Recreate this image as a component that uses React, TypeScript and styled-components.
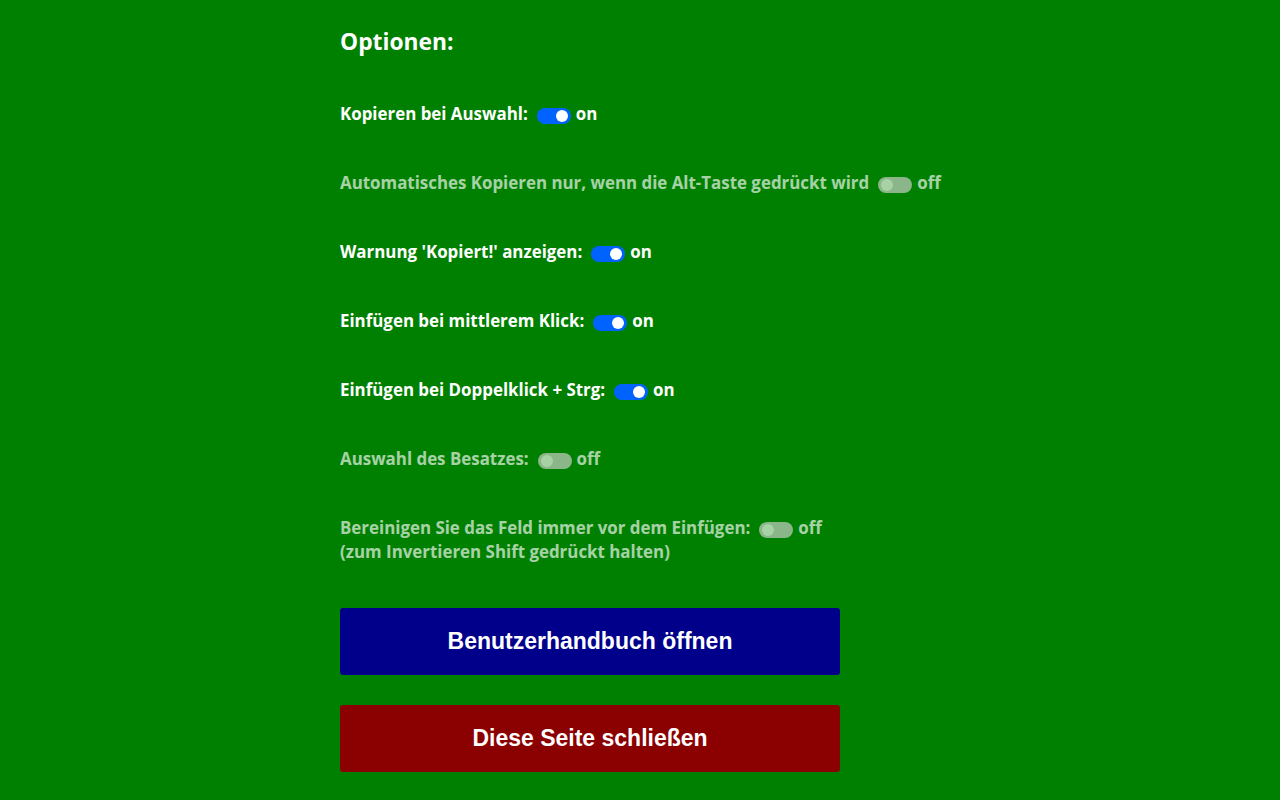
import React, { useState } from 'react';
import styled, { createGlobalStyle } from 'styled-components';

const GlobalStyle = createGlobalStyle`
  html, body {
    margin: 0;
    padding: 0;
    background: #008000;
  }
  body {
    font-family: 'Open Sans', 'Noto Sans', sans-serif;
    color: #ffffff;
  }
`;

const Page = styled.div`
  width: 600px;
  margin: 0 auto;
  padding-top: 28px;
  display: flex;
  flex-direction: column;
`;

const Title = styled.h1`
  margin: 0 0 46px;
  font-size: 22.8px;
  line-height: 28px;
  font-weight: 700;
`;

const OptionList = styled.div`
  display: flex;
  flex-direction: column;
  gap: 45px;
`;

const Row = styled.div<{ disabled?: boolean }>`
  font-size: 16.9px;
  line-height: 24px;
  font-weight: 700;
  white-space: nowrap;
  opacity: ${(p) => (p.disabled ? 0.65 : 1)};
`;

const Line = styled.div`
  display: flex;
  align-items: center;
`;

const Track = styled.span<{ on: boolean }>`
  position: relative;
  flex-shrink: 0;
  display: inline-block;
  width: 34px;
  height: 16px;
  margin: 4px 5px 0 9px;
  border-radius: 8px;
  background: ${(p) => (p.on ? '#0062ff' : '#d4d4d4')};
  cursor: pointer;
`;

const Knob = styled.span<{ on: boolean }>`
  position: absolute;
  top: 2px;
  left: ${(p) => (p.on ? '19px' : '3px')};
  width: 12px;
  height: 12px;
  border-radius: 50%;
  background: #ffffff;
`;

const Actions = styled.div`
  margin-top: 44px;
  display: flex;
  flex-direction: column;
  gap: 30px;
`;

const Button = styled.button<{ tone: string }>`
  width: 500px;
  height: 67px;
  border: none;
  border-radius: 3px;
  background: ${(p) => p.tone};
  color: #ffffff;
  font-family: 'Liberation Sans', Arial, sans-serif;
  font-size: 23px;
  font-weight: 700;
  cursor: pointer;
`;

interface Option {
  label: string;
  on: boolean;
  disabled?: boolean;
  note?: string;
}

const initial: Option[] = [
  { label: 'Kopieren bei Auswahl:', on: true },
  { label: 'Automatisches Kopieren nur, wenn die Alt-Taste gedrückt wird', on: false, disabled: true },
  { label: "Warnung 'Kopiert!' anzeigen:", on: true },
  { label: 'Einfügen bei mittlerem Klick:', on: true },
  { label: 'Einfügen bei Doppelklick + Strg:', on: true },
  { label: 'Auswahl des Besatzes:', on: false, disabled: true },
  {
    label: 'Bereinigen Sie das Feld immer vor dem Einfügen:',
    on: false,
    disabled: true,
    note: '(zum Invertieren Shift gedrückt halten)',
  },
];

const App = () => {
  const [options, setOptions] = useState<Option[]>(initial);

  const toggle = (index: number) => {
    setOptions(options.map((o, i) => (i === index ? { ...o, on: !o.on } : o)));
  };

  return (
    <>
      <GlobalStyle />
      <Page>
        <Title>Optionen:</Title>
        <OptionList>
          {options.map((option, index) => (
            <Row key={index} disabled={option.disabled}>
              <Line>
                {option.label}
                <Track on={option.on} onClick={() => toggle(index)}>
                  <Knob on={option.on} />
                </Track>
                {option.on ? 'on' : 'off'}
              </Line>
              {option.note && <div>{option.note}</div>}
            </Row>
          ))}
        </OptionList>
        <Actions>
          <Button tone="#00008b">Benutzerhandbuch öffnen</Button>
          <Button tone="#8b0000">Diese Seite schließen</Button>
        </Actions>
      </Page>
    </>
  );
};

export default App;
